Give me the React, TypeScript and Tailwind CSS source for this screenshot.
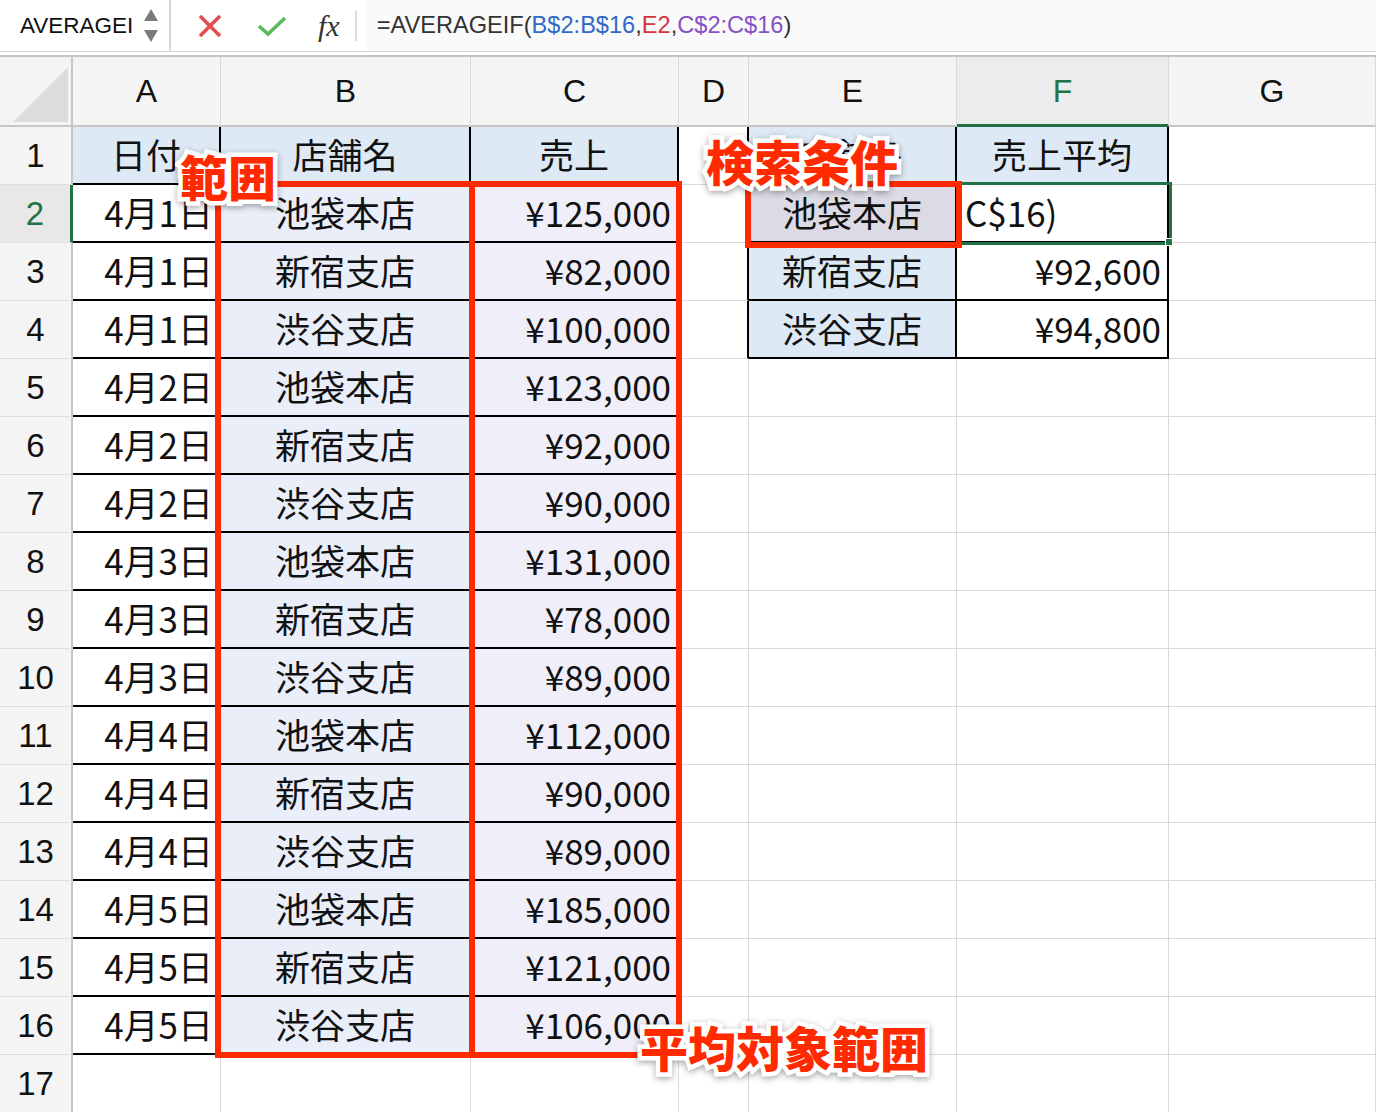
import React from "react";

const cols = ["A", "B", "C", "D", "E", "F", "G"];

const dates = ["4月1日", "4月1日", "4月1日", "4月2日", "4月2日", "4月2日", "4月3日", "4月3日", "4月3日", "4月4日", "4月4日", "4月4日", "4月5日", "4月5日", "4月5日"];
const stores = ["池袋本店", "新宿支店", "渋谷支店"];
const sales = ["¥125,000", "¥82,000", "¥100,000", "¥123,000", "¥92,000", "¥90,000", "¥131,000", "¥78,000", "¥89,000", "¥112,000", "¥90,000", "¥89,000", "¥185,000", "¥121,000", "¥106,000"];

type Cell = { text?: string; align?: "l" | "c" | "r"; bg?: string };

// content of a cell by row (1-based) and column index (0 = A)
const getCell = (r: number, c: number): Cell => {
  if (r === 1) {
    if (c === 0) return { text: "日付", align: "c", bg: "bg-[#dde9f5]" };
    if (c === 1) return { text: "店舗名", align: "c", bg: "bg-[#dde9f5]" };
    if (c === 2) return { text: "売上", align: "c", bg: "bg-[#dde9f5]" };
    if (c === 4) return { text: "店舗名", align: "c", bg: "bg-[#dde9f5]" };
    if (c === 5) return { text: "売上平均", align: "c", bg: "bg-[#dde9f5]" };
    return {};
  }
  if (r >= 2 && r <= 16) {
    const i = r - 2;
    if (c === 0) return { text: dates[i], align: "r" };
    if (c === 1) return { text: stores[i % 3], align: "c", bg: "bg-[#e9eef9]" };
    if (c === 2) return { text: sales[i], align: "r", bg: "bg-[#f0eef8]" };
  }
  if (r === 2 && c === 4) return { text: "池袋本店", align: "c", bg: "bg-[#dcdae5]" };
  if (r === 3 && c === 4) return { text: "新宿支店", align: "c", bg: "bg-[#dde9f5]" };
  if (r === 4 && c === 4) return { text: "渋谷支店", align: "c", bg: "bg-[#dde9f5]" };
  if (r === 2 && c === 5) return { text: "C$16)", align: "l" };
  if (r === 3 && c === 5) return { text: "¥92,600", align: "r" };
  if (r === 4 && c === 5) return { text: "¥94,800", align: "r" };
  return {};
};

const rightBorder = (r: number, c: number) => {
  const black =
    (c <= 2 && r >= 1 && r <= 16) || (c >= 3 && c <= 5 && r >= 1 && r <= 4);
  return black ? "border-r-2 border-r-black" : "border-r border-r-[#d9d9d9]";
};

const bottomBorder = (r: number, c: number) => {
  const black = (c <= 2 && r >= 1 && r <= 16) || ((c === 4 || c === 5) && r >= 1 && r <= 4);
  return black ? "border-b-2 border-b-black" : "border-b border-b-[#d9d9d9]";
};

const alignClass = { l: "justify-start pl-2", c: "justify-center", r: "justify-end pr-[6px]" };

const Label = ({ text, pos }: { text: string; pos: string }) => (
  <div className={`absolute ${pos} text-[48px] leading-none font-black tracking-normal`}>
    <span className="relative block whitespace-nowrap">
      <span className="absolute inset-0 text-white [-webkit-text-stroke:9px_white] drop-shadow-[0_2px_3px_rgba(0,0,0,0.35)]">
        {text}
      </span>
      <span className="relative text-[#ff2a00]">{text}</span>
    </span>
  </div>
);

export default function App() {
  const rows = Array.from({ length: 17 }, (_, i) => i + 1);

  return (
    <div className="relative w-[1376px] h-[1112px] overflow-hidden bg-white text-[#111] font-['Noto_Sans_CJK_JP',sans-serif]">
      {/* Formula bar */}
      <div className="flex h-[52px] items-center border-b border-b-[#d4d4d4] bg-white">
        <div className="flex h-full w-[171px] items-center border-r-2 border-r-[#d6d6d6] pl-5 pr-2">
          <span className="font-['Liberation_Sans',sans-serif] text-[22.5px] text-[#111]">AVERAGEI</span>
          <svg className="ml-auto mr-[2px]" width="16" height="36" viewBox="0 0 16 36">
            <path d="M8 1 L15 13 L1 13 Z" fill="#7b7b7b" />
            <path d="M1 22 L15 22 L8 34 Z" fill="#7b7b7b" />
          </svg>
        </div>
        <div className="flex items-center h-full">
          <svg className="ml-[27px]" width="24" height="22" viewBox="0 0 24 22">
            <path d="M2 1 L22 21 M22 1 L2 21" stroke="#e34f4f" strokeWidth="3.6" />
          </svg>
          <svg className="ml-[35px]" width="30" height="22" viewBox="0 0 30 22">
            <path d="M2 11 L11 19 L28 3" stroke="#5cb85c" strokeWidth="3.6" fill="none" />
          </svg>
          <span className="ml-[31px] font-['Liberation_Serif',serif] italic text-[30px] text-[#333] leading-none">fx</span>
          <div className="ml-[15px] h-[30px] w-[2px] bg-[#dcdcdc]" />
        </div>
        <div className="flex h-full flex-1 items-center ml-[10px] pl-[10px] bg-[#fafafa] font-['Liberation_Sans',sans-serif] text-[23.6px] text-[#333]">
          <span>=AVERAGEIF(</span>
          <span className="text-[#3169c6]">B$2:B$16</span>
          <span>,</span>
          <span className="text-[#d1343a]">E2</span>
          <span>,</span>
          <span className="text-[#8553c5]">C$2:C$16</span>
          <span>)</span>
        </div>
      </div>
      <div className="h-[3px] bg-white" />
      <div className="h-[2px] bg-[#c4c4c4]" />

      {/* Sheet */}
      <div className="grid grid-cols-[73px_148px_250px_208px_70px_208px_212px_207px] grid-rows-[70px_repeat(17,58px)]">
        {/* corner */}
        <div className="relative bg-[#f4f4f4] border-r-2 border-r-[#c6c6c6] border-b-2 border-b-[#c6c6c6]">
          <svg className="absolute left-0 top-0" width="73" height="70" viewBox="0 0 73 70">
            <path d="M13 65 L68 65 L68 10 Z" fill="#dcdcdc" />
          </svg>
        </div>
        {cols.map((c) => (
          <div
            key={c}
            className={`flex items-center justify-center font-['Liberation_Sans',sans-serif] text-[32px] border-r border-r-[#d9d9d9] ${
              c === "F"
                ? "bg-[#ececec] text-[#217346] border-b-[3px] border-b-[#217346]"
                : "bg-[#f4f4f4] text-[#111] border-b-2 border-b-[#c6c6c6]"
            }`}
          >
            {c}
          </div>
        ))}

        {rows.map((r) => (
          <React.Fragment key={r}>
            <div
              className={`flex items-center justify-center font-['Liberation_Sans',sans-serif] text-[33px] border-b border-b-[#dedede] ${
                r === 2
                  ? "bg-[#e8e8e8] text-[#217346] border-r-[3px] border-r-[#217346]"
                  : "bg-[#f4f4f4] text-[#111] border-r-2 border-r-[#c6c6c6]"
              }`}
            >
              {r}
            </div>
            {cols.map((_, c) => {
              const cell = getCell(r, c);
              return (
                <div
                  key={c}
                  className={`flex items-center whitespace-nowrap text-[35px] leading-none pb-[3px] ${cell.bg ?? "bg-white"} ${rightBorder(r, c)} ${bottomBorder(r, c)} ${alignClass[cell.align ?? "c"]}`}
                >
                  {cell.text}
                </div>
              );
            })}
          </React.Fragment>
        ))}
      </div>

      {/* F2 selection */}
      <div className="absolute left-[956px] top-[182px] w-[216px] h-[63px] border-[3px] border-[#217346]" />
      <div className="absolute left-[1165px] top-[238px] w-[8px] h-[8px] bg-[#217346] border border-white" />

      {/* red range boxes */}
      <div className="absolute left-[215px] top-[181px] w-[260px] h-[877px] border-[6px] border-[#ff2a00]" />
      <div className="absolute left-[469px] top-[181px] w-[213px] h-[877px] border-[6px] border-[#ff2a00]" />
      <div className="absolute left-[745px] top-[181px] w-[217px] h-[67px] border-[6px] border-[#ff2a00]" />

      <Label text="範囲" pos="left-[180px] top-[151px]" />
      <Label text="検索条件" pos="left-[706px] top-[136px]" />
      <Label text="平均対象範囲" pos="left-[640px] top-[1022px]" />
    </div>
  );
}
